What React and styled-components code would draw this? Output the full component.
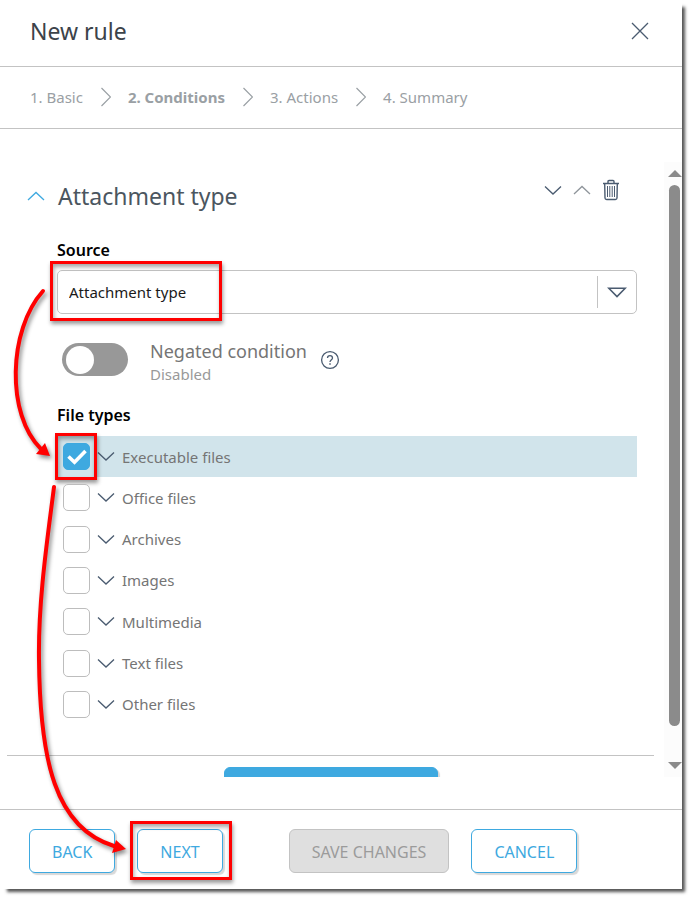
import React, { useState } from 'react';
import styled, { createGlobalStyle, css } from 'styled-components';

const palette = {
  blue: '#3ea9e0',
  slate: '#4a5b70',
  line: '#c3c3c3',
  text: '#757575',
  muted: '#9aa0a4',
  red: '#ff0000',
};

const GlobalStyle = createGlobalStyle`
  *, *::before, *::after {
    box-sizing: border-box;
  }

  body {
    margin: 0;
    background: white;
    font-family: 'Noto Sans', 'Open Sans', sans-serif;
    font-size: 15px;
    line-height: 20px;
    color: ${palette.text};
  }

  button, select {
    font: inherit;
  }
`;

const Page = styled.div`
  display: flex;
  height: 100vh;
  min-height: 400px;
  padding: 0 10px 10px 0;
`;

const Dialog = styled.div`
  position: relative;
  display: flex;
  flex: 1;
  flex-direction: column;
  min-width: 0;
  background: white;

  &::before {
    content: '';
    position: absolute;
    z-index: -1;
    inset: 6px 0 0 6px;
    box-shadow: 2px 2px 3px 1px #555555;
  }
`;

const Header = styled.header`
  display: flex;
  align-items: center;
  justify-content: space-between;
  height: 67px;
  padding: 0 33px 4px 30px;
  background: white;
  border-bottom: 1px solid ${palette.line};
`;

const Title = styled.h1`
  margin: 0;
  font-size: 23px;
  line-height: 32px;
  font-weight: 400;
  color: #3c434a;
`;

const IconButton = styled.button`
  display: flex;
  padding: 0;
  border: 0;
  background: none;
  color: ${(props) => props.$color || palette.slate};
  cursor: pointer;
`;

const Steps = styled.ol`
  display: flex;
  align-items: center;
  gap: 18px;
  height: 62px;
  margin: 0;
  padding: 0 30px 2px;
  list-style: none;
  background: white;
  border-bottom: 1px solid ${palette.line};
`;

const Step = styled.li`
  display: flex;
  align-items: center;
  gap: 17px;
  color: ${palette.muted};
  font-weight: ${(props) => (props.$active ? 700 : 400)};
  white-space: nowrap;
`;

const Body = styled.main`
  display: flex;
  flex: 1;
  min-height: 0;
  padding: 33px 0 32px;
  background: white;
`;

const Content = styled.div`
  flex: 1;
  min-width: 0;
  overflow: hidden;
`;

const Scrollbar = styled.div`
  display: flex;
  flex-direction: column;
  align-items: center;
  gap: 8px;
  width: 18px;
  padding: 8px 0 8px 3px;
  background: #fcfcfc;
  color: #8b8b8b;
`;

const ScrollTrack = styled.div`
  flex: 1;
  width: 11px;
`;

const ScrollThumb = styled.div`
  height: 95%;
  border-radius: 6px;
  background: #8b8b8b;
`;

const SectionHeader = styled.div`
  display: flex;
  align-items: center;
  gap: 13px;
  padding: 17px 44px 0 27px;
`;

const SectionTitle = styled.h2`
  flex: 1;
  margin: 0;
  font-size: 23px;
  line-height: 32px;
  font-weight: 400;
  color: #4b5660;
`;

const SectionActions = styled.div`
  display: flex;
  align-items: center;
  gap: 11px;
  padding-bottom: 12px;
`;

const Form = styled.div`
  padding: 27px 27px 30px 57px;
`;

const labelText = css`
  display: block;
  padding: 0;
  font-size: 16px;
  line-height: 20px;
  font-weight: 600;
  color: black;
`;

const Label = styled.label`
  ${labelText}
`;

const Highlight = styled.div`
  position: absolute;
  inset: ${(props) => props.$inset};
  width: ${(props) => props.$width || 'auto'};
  border: 3px solid ${palette.red};
  box-shadow: 1px 3px 4px rgba(0, 0, 0, 0.4), inset 1px 3px 4px rgba(0, 0, 0, 0.35);
  pointer-events: none;
`;

const SelectBox = styled.div`
  position: relative;
  display: flex;
  align-items: center;
  height: 44px;
  margin-top: 10px;
  border: 1px solid ${palette.line};
  border-radius: 5px;
`;

const Select = styled.select`
  flex: 1;
  height: 42px;
  padding: 0 11px;
  border: 0;
  background: none;
  color: #1a1a1a;
  appearance: none;
`;

const SelectArrow = styled.span`
  display: flex;
  align-items: center;
  justify-content: center;
  width: 39px;
  height: 32px;
  border-left: 1px solid ${palette.line};
  color: ${palette.slate};
  pointer-events: none;
`;

const ToggleRow = styled.div`
  display: flex;
  align-items: center;
  margin-top: 20px;
  padding-left: 5px;
`;

const Toggle = styled.input`
  display: flex;
  align-items: center;
  width: 66px;
  height: 33px;
  margin: 0 22px 0 0;
  padding: 0 4px;
  border-radius: 17px;
  background: ${(props) => (props.checked ? palette.blue : '#989898')};
  appearance: none;
  cursor: pointer;

  &::before {
    content: '';
    width: 28px;
    height: 28px;
    margin-left: ${(props) => (props.checked ? '30px' : '0')};
    border-radius: 50%;
    background: white;
  }
`;

const ToggleLabel = styled.label`
  margin-right: 13px;
  padding-top: 5px;
  font-size: 18px;
  line-height: 24px;
`;

const ToggleState = styled.span`
  display: block;
  font-size: 15px;
  line-height: 22px;
  color: #999999;
`;

const FileTypes = styled.fieldset`
  margin: 20px 0 0;
  padding: 0;
  border: 0;
`;

const Legend = styled.legend`
  ${labelText}
`;

const FileList = styled.ul`
  display: grid;
  grid-auto-rows: 1fr;
  min-height: 289px;
  margin: 11px 0 0;
  padding: 0;
  list-style: none;
`;

const FileRow = styled.li`
  display: flex;
  align-items: center;
  gap: 7px;
  padding-left: 6px;
  background: ${(props) => (props.$checked ? '#d1e4eb' : 'transparent')};
`;

const CheckWrapper = styled.span`
  position: relative;
  display: grid;
`;

const CheckMark = styled.svg`
  grid-area: 1 / 1;
  place-self: center;
  color: white;
  pointer-events: none;
`;

const Checkbox = styled.input`
  grid-area: 1 / 1;
  width: 27px;
  height: 27px;
  margin: 0;
  border: 1px solid ${(props) => (props.checked ? palette.blue : '#bdbdbd')};
  border-radius: 5px;
  background: ${(props) => (props.checked ? palette.blue : 'white')};
  appearance: none;
  cursor: pointer;
`;

const FileLabel = styled.label`
  cursor: pointer;
`;

const AddArea = styled.div`
  display: flex;
  justify-content: center;
  margin: 0 10px 0 7px;
  padding-top: 11px;
  border-top: 1px solid ${palette.line};
`;

const Footer = styled.footer`
  display: flex;
  align-items: center;
  gap: 22px;
  height: 80px;
  padding: 2px 29px 0;
  background: white;
  border-top: 1px solid ${palette.line};
`;

const disabledButton = css`
  border-color: #c3c3c3;
  background: #dfdfdf;
  box-shadow: none;
  color: #9b9b9b;
  cursor: default;
`;

const Button = styled.button`
  height: 44px;
  padding: 2px 22px 0;
  border: 1px solid ${palette.blue};
  border-radius: 6px;
  background: ${(props) => (props.$primary ? palette.blue : 'white')};
  box-shadow: 2px 2px 1px #d8d8d8;
  color: ${(props) => (props.$primary ? 'white' : palette.blue)};
  font-size: 16px;
  white-space: nowrap;
  cursor: pointer;
  ${(props) => (props.disabled ? disabledButton : '')}
`;

const AddButton = styled(Button)`
  width: 214px;
`;

const ButtonSlot = styled.div`
  position: relative;
  margin-right: 44px;
`;

const Arrows = styled.svg`
  position: absolute;
  top: 0;
  left: 0;
  pointer-events: none;
  filter: drop-shadow(2px 3px 2px rgba(0, 0, 0, 0.45));
`;

const chevrons = {
  down: 'M1 1.5 9 9 17 1.5',
  up: 'M1 9 9 1.5 17 9',
};

const Chevron = ({ direction = 'down' }) => (
  <svg width="18" height="11" viewBox="0 0 18 11" fill="none" stroke="currentColor" strokeWidth="1.3" aria-hidden="true">
    <path d={chevrons[direction]} />
  </svg>
);

const StepChevron = () => (
  <svg width="10" height="20" viewBox="0 0 10 20" fill="none" stroke="currentColor" strokeWidth="1.2" aria-hidden="true">
    <path d="M0.5 1 9.5 10 0.5 19" />
  </svg>
);

const CloseIcon = () => (
  <svg width="18" height="18" viewBox="0 0 18 18" fill="none" stroke="currentColor" strokeWidth="1.3" aria-hidden="true">
    <path d="M1 1 17 17M17 1 1 17" />
  </svg>
);

const TrashIcon = () => (
  <svg width="18" height="22" viewBox="0 0 18 22" fill="none" stroke="currentColor" strokeWidth="1.4" aria-hidden="true">
    <path d="M1 4.5H17M6 4V2.5Q6 1.5 7 1.5H11Q12 1.5 12 2.5V4M2.7 5 3 19Q3.1 20.5 4.6 20.5H13.4Q14.9 20.5 15 19L15.3 5" />
    <path d="M5.5 7V18M7.8 7V18M10.2 7V18M12.5 7V18" strokeWidth="1" />
  </svg>
);

const HelpIcon = () => (
  <svg width="20" height="20" viewBox="0 0 20 20" fill="none" stroke="currentColor" strokeWidth="1.3" aria-hidden="true">
    <circle cx="10" cy="10" r="8.4" />
    <path d="M7.5 8.1Q7.5 5.6 10 5.6 12.5 5.6 12.5 7.9 12.5 9 11.2 9.9 10 10.8 10 12" />
    <path d="M10 13.2V14.8" strokeWidth="1.5" />
  </svg>
);

const ScrollArrow = ({ d }) => (
  <svg width="14" height="7" viewBox="0 0 14 7" fill="currentColor" aria-hidden="true">
    <path d={d} />
  </svg>
);

const steps = ['1. Basic', '2. Conditions', '3. Actions', '4. Summary'];

const fileTypes = [
  'Executable files',
  'Office files',
  'Archives',
  'Images',
  'Multimedia',
  'Text files',
  'Other files',
];

const App = () => {
  const [negated, setNegated] = useState(false);
  const [selected, setSelected] = useState(['Executable files']);

  const toggleType = (type) =>
    setSelected((current) =>
      current.includes(type) ? current.filter((item) => item !== type) : [...current, type]
    );

  return (
    <Page>
      <GlobalStyle />
      <Dialog role="dialog" aria-labelledby="dialog-title">
        <Header>
          <Title id="dialog-title">New rule</Title>
          <IconButton type="button" aria-label="Close">
            <CloseIcon />
          </IconButton>
        </Header>
        <Steps>
          {steps.map((step, index) => (
            <Step key={step} $active={index === 1}>
              {index > 0 && <StepChevron />}
              {step}
            </Step>
          ))}
        </Steps>
        <Body>
          <Content>
            <SectionHeader>
              <IconButton type="button" aria-label="Collapse" $color={palette.blue}>
                <Chevron direction="up" />
              </IconButton>
              <SectionTitle>Attachment type</SectionTitle>
              <SectionActions>
                <IconButton type="button" aria-label="Move down">
                  <Chevron />
                </IconButton>
                <IconButton type="button" aria-label="Move up" $color="#8f959b">
                  <Chevron direction="up" />
                </IconButton>
                <IconButton type="button" aria-label="Delete">
                  <TrashIcon />
                </IconButton>
              </SectionActions>
            </SectionHeader>
            <Form>
              <Label htmlFor="source">Source</Label>
              <SelectBox>
                <Select id="source">
                  <option>Attachment type</option>
                </Select>
                <SelectArrow>
                  <svg width="20" height="11" viewBox="0 0 20 11" fill="none" stroke="currentColor" strokeWidth="1.6">
                    <path d="M1.8 1.2H18.2L10 9.6Z" />
                  </svg>
                </SelectArrow>
                <Highlight $inset="-10px auto -8px -8px" $width="172px" />
              </SelectBox>
              <ToggleRow>
                <Toggle
                  type="checkbox"
                  role="switch"
                  id="negated"
                  checked={negated}
                  onChange={() => setNegated(!negated)}
                />
                <ToggleLabel htmlFor="negated">
                  Negated condition
                  <ToggleState>{negated ? 'Enabled' : 'Disabled'}</ToggleState>
                </ToggleLabel>
                <IconButton type="button" aria-label="Help">
                  <HelpIcon />
                </IconButton>
              </ToggleRow>
              <FileTypes>
                <Legend>File types</Legend>
                <FileList>
                  {fileTypes.map((type, index) => (
                    <FileRow key={type} $checked={selected.includes(type)}>
                      <CheckWrapper>
                        <Checkbox
                          type="checkbox"
                          id={`type-${index}`}
                          checked={selected.includes(type)}
                          onChange={() => toggleType(type)}
                        />
                        {selected.includes(type) && (
                          <CheckMark width="20" height="16" viewBox="0 0 20 16" fill="none" stroke="currentColor" strokeWidth="3.6">
                            <path d="M1.5 7.5 7.5 13.2 18.5 2" />
                          </CheckMark>
                        )}
                        {index === 0 && <Highlight as="span" $inset="-10px -7px -10px -8px" />}
                      </CheckWrapper>
                      <IconButton type="button" aria-label={`Expand ${type}`}>
                        <Chevron />
                      </IconButton>
                      <FileLabel htmlFor={`type-${index}`}>{type}</FileLabel>
                    </FileRow>
                  ))}
                </FileList>
              </FileTypes>
            </Form>
            <AddArea>
              <AddButton type="button" $primary aria-label="Add condition" />
            </AddArea>
          </Content>
          <Scrollbar aria-hidden="true">
            <ScrollArrow d="M7 0 14 7H0Z" />
            <ScrollTrack>
              <ScrollThumb />
            </ScrollTrack>
            <ScrollArrow d="M0 0H14L7 7Z" />
          </Scrollbar>
        </Body>
        <Footer>
          <Button type="button">BACK</Button>
          <ButtonSlot>
            <Button type="button">NEXT</Button>
            <Highlight $inset="-8px -9px -7px -7px" />
          </ButtonSlot>
          <Button type="button" disabled>
            SAVE CHANGES
          </Button>
          <Button type="button">CANCEL</Button>
        </Footer>
        <Arrows width="240" height="880" viewBox="0 0 240 880" fill="none" stroke={palette.red} strokeWidth="4" strokeLinecap="round" aria-hidden="true">
          <path d="M43 291C8 330 6 415 41 449" />
          <path d="M50 456 36 454 45 443Z" fill={palette.red} stroke="none" />
          <path d="M54 487C48 535 38 600 39 660C40 760 55 828 114 846" />
          <path d="M126 849 112 853 116 840Z" fill={palette.red} stroke="none" />
        </Arrows>
      </Dialog>
    </Page>
  );
};

export default App;
